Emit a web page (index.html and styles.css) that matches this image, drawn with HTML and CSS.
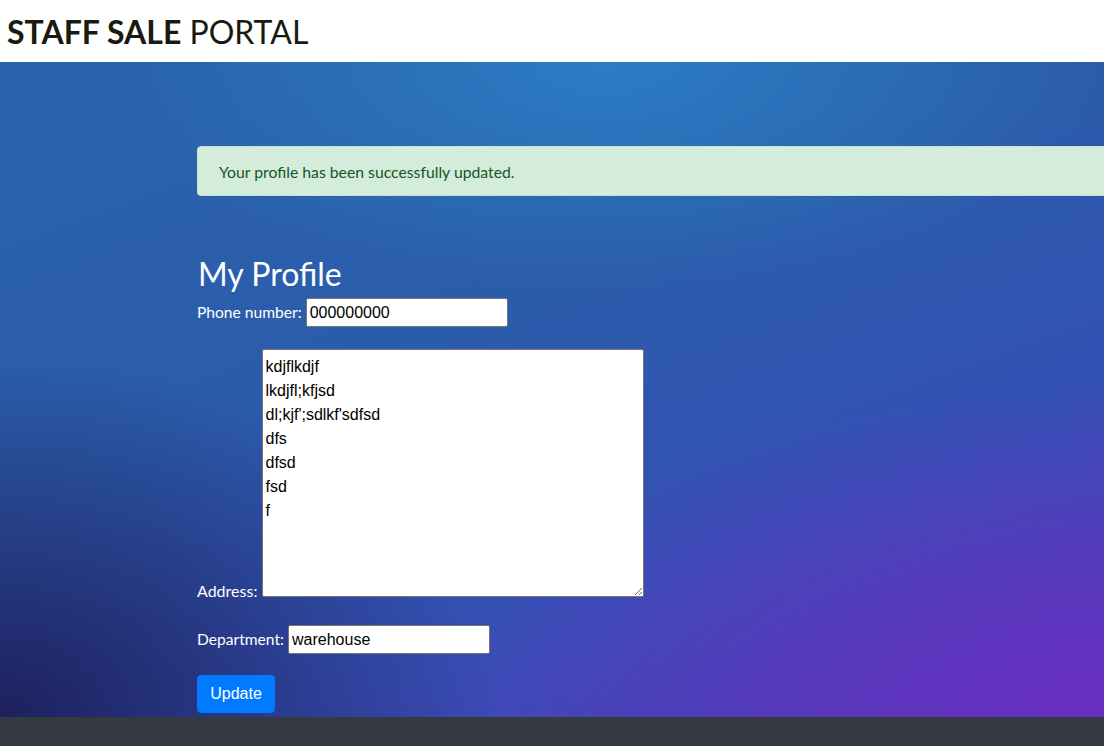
FILE: index.html
```html
<!DOCTYPE html>
<html lang="en">
<head>
<meta charset="utf-8">
<title>Staff Sale Portal</title>
<link rel="stylesheet" href="styles.css">
</head>
<body>
<header class="topbar">
  <div class="brand"><strong>STAFF SALE</strong> PORTAL</div>
</header>
<main class="hero">
  <div class="content">
    <div class="alert">Your profile has been successfully updated.</div>
    <h1 class="title">My Profile</h1>
    <form class="profile-form">
      <div class="row row-phone">
        <label class="lbl" for="phone">Phone number:</label> <input class="field field-phone" id="phone" type="text" value="000000000">
      </div>
      <div class="row row-address">
        <label class="lbl lbl-address" for="address">Address:</label> <textarea class="field field-address" id="address">kdjflkdjf
lkdjfl;kfjsd
dl;kjf';sdlkf'sdfsd
dfs
dfsd
fsd
f</textarea>
      </div>
      <div class="row row-dept">
        <label class="lbl" for="dept">Department:</label> <input class="field field-dept" id="dept" type="text" value="warehouse">
      </div>
      <div class="row row-btn">
        <button class="btn" type="button">Update</button>
      </div>
    </form>
  </div>
</main>
<footer class="footer"></footer>
</body>
</html>
```
FILE: styles.css
```css
* { box-sizing: border-box; }
html, body {
  margin: 0;
  padding: 0;
  height: 100%;
}
body {
  display: flex;
  flex-direction: column;
  overflow: hidden;
  font-family: Lato, "Liberation Sans", sans-serif;
  color: #212529;
  background: #fff;
}
.topbar {
  height: 62px;
  flex: none;
  display: flex;
  align-items: center;
  padding-left: 7px;
  background: #fff;
}
.brand {
  font-family: Lato, sans-serif;
  font-size: 32px;
  color: #1a1a10;
  line-height: 1;
  padding-top: 2px;
}
.brand strong { font-weight: 700; }
.hero {
  flex: 1;
  background:
    radial-gradient(ellipse 45% 35% at 55% 0%, rgba(44,130,200,0.85), rgba(44,130,200,0) 100%),
    radial-gradient(ellipse 60% 50% at 100% 100%, rgba(110,45,195,0.9), rgba(110,45,195,0) 100%),
    radial-gradient(ellipse 45% 55% at 0% 100%, rgba(28,30,88,0.95), rgba(28,30,88,0) 100%),
    linear-gradient(160deg, #2a63ad 0%, #2b5cab 40%, #3550b5 70%, #4a3cb8 100%);
  padding: 84px 0 0 197px;
  overflow: hidden;
}
.content { width: 1000px; }
.alert {
  height: 50px;
  display: flex;
  align-items: center;
  padding: 0 21px;
  background: #d4edda;
  color: #155724;
  border: 1px solid #c3e6cb;
  border-radius: 4px;
  font-size: 15.75px;
}
.title {
  margin: 58px 0 0 1px;
  font-weight: 400;
  font-size: 32px;
  line-height: 40px;
  color: #fff;
}
.profile-form {
  display: flex;
  flex-direction: column;
  align-items: flex-start;
}
.lbl {
  color: #fff;
  font-size: 15.6px;
  font-family: Lato, sans-serif;
}
.lbl-address { font-size: 16px; }
.field {
  font-family: "Liberation Sans", Arial, sans-serif;
  font-size: 16px;
  color: #000;
  background: #fff;
  border: 1px solid #767676;
  border-radius: 2px;
  padding: 1px 3px;
  outline: none;
}
.row-phone { margin-top: 4px; }
.field-phone { width: 202px; height: 29px; }
.row-address { margin-top: 22px; }
.field-address {
  width: 382px;
  height: 248px;
  padding: 5px 3px 3px;
  line-height: 24px;
  resize: both;
  vertical-align: baseline;
  overflow: hidden;
}
.row-dept { margin-top: 25px; }
.field-dept { width: 202px; height: 29px; }
.row-btn { margin-top: 21px; }
.btn {
  font-family: "Liberation Sans", Arial, sans-serif;
  font-size: 16px;
  color: #fff;
  background: #007bff;
  border: 1px solid #007bff;
  border-radius: 4px;
  padding: 0 12px;
  height: 38px;
  width: 78px;
}
.footer {
  height: 29px;
  flex: none;
  background: #343a40;
}
```
